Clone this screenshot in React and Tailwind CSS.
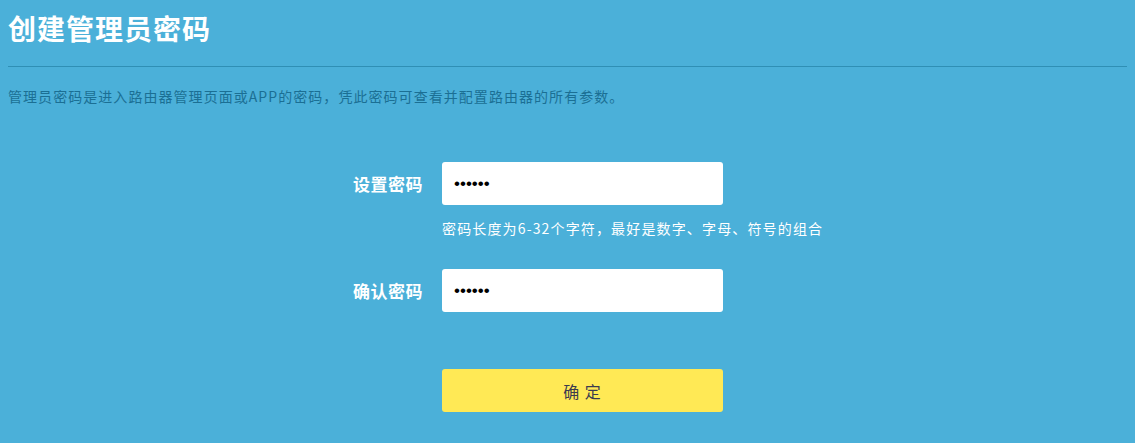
export default function App() {
  const font = { fontFamily: '"Microsoft YaHei", "Noto Sans CJK SC", "Liberation Sans", sans-serif' };
  return (
    <div className="w-[1135px] h-[443px] bg-[#4bb0d9] overflow-hidden" style={font}>
      <div className="px-2">
        <h1 className="pt-[10px] h-[67px] text-[28px] leading-[36px] tracking-[1px] font-bold text-white border-b border-[#2f8fb5]">
          创建管理员密码
        </h1>
        <p className="mt-[19px] text-[14px] leading-[20px] tracking-[1.05px] text-[#1b6f94]">
          管理员密码是进入路由器管理页面或APP的密码，凭此密码可查看并配置路由器的所有参数。
        </p>
      </div>

      <div className="mt-[56px] flex flex-col">
        <div className="flex items-center">
          <label className="w-[423px] text-right text-[17px] tracking-[0.5px] font-bold text-white">设置密码</label>
          <input
            type="password"
            readOnly
            value="abcdef"
            className="ml-[19px] w-[281px] h-[43px] bg-white rounded-[3px] pl-[12px] outline-none text-[17px] text-black"
            style={{ fontFamily: '"Liberation Sans", sans-serif' }}
          />
        </div>
        <div className="ml-[442px] mt-[13px] text-[14px] leading-[20px] tracking-[1.15px] text-white">
          密码长度为6-32个字符，最好是数字、字母、符号的组合
        </div>
        <div className="flex items-center mt-[31px]">
          <label className="w-[423px] text-right text-[17px] tracking-[0.5px] font-bold text-white">确认密码</label>
          <input
            type="password"
            readOnly
            value="abcdef"
            className="ml-[19px] w-[281px] h-[43px] bg-white rounded-[3px] pl-[12px] outline-none text-[17px] text-black"
            style={{ fontFamily: '"Liberation Sans", sans-serif' }}
          />
        </div>
        <button className="ml-[442px] mt-[57px] w-[281px] h-[43px] bg-[#ffe955] rounded-[3px] text-[16px] tracking-[1px] text-[#3b3b4f]">
          确 定
        </button>
      </div>
    </div>
  );
}
